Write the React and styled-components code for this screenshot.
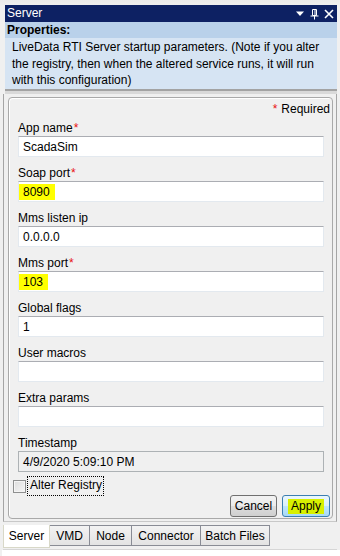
import styled, { createGlobalStyle } from "styled-components";

const GlobalStyle = createGlobalStyle`
  html, body {
    margin: 0;
    padding: 0;
    background: #f0f0f0;
  }
  body {
    font-family: "Liberation Sans", Arial, sans-serif;
    font-size: 12px;
    color: #000;
  }
`;

const Page = styled.div`
  width: 340px;
  height: 556px;
  padding-top: 5px;
  box-sizing: border-box;
  background: linear-gradient(180deg, #ebebeb 0px, #f0f0f0 6px);
  overflow: hidden;
`;

const Pane = styled.div`
  margin-left: 5px;
  width: 332px;
`;

const TitleBar = styled.div`
  height: 17px;
  background: #0d2163;
  color: #fff;
  display: flex;
  align-items: center;
  padding: 0 3px 0 2px;
  line-height: 17px;
`;

const TitleText = styled.span`
  flex: 1;
`;

const TitleButtons = styled.div`
  display: flex;
  align-items: center;
  gap: 5px;
  height: 17px;
`;

const PropsHeader = styled.div`
  height: 16px;
  line-height: 16px;
  background: #b9d1ea;
  font-weight: bold;
  padding-left: 2px;
`;

const Description = styled.div`
  background: #d6e4f3;
  padding: 1px 6px 2px 7px;
  line-height: 16.5px;
  height: 48px;
`;

const Splitter = styled.div`
  height: 3px;
  border-top: 2px solid #a3a3a3;
  background: #d9d9d9;
`;

const Body = styled.div`
  border-left: 1px solid #a5a5a5;
  border-right: 1px solid #a5a5a5;
  border-bottom: 1px solid #c8c8c8;
  margin-left: -2px;
  padding: 3px 3px 2px 4px;
  background: #f0f0f0;
`;

const GroupBox = styled.div`
  border: 1px solid #a9a9a9;
  border-radius: 4px;
  box-shadow: inset 1px 1px 0 #ffffff;
  padding: 4px 2px 2px 0;
  display: flex;
  flex-direction: column;
  height: 422px;
  box-sizing: border-box;
`;

const RequiredNote = styled.div`
  text-align: right;
  line-height: 15px;
  height: 15px;
  margin-bottom: 4px;
`;

const Star = styled.span`
  color: #e81010;
  margin-right: ${(p) => (p.$lead ? "4px" : "0")};
  margin-left: ${(p) => (p.$lead ? "0" : "1px")};
`;

const Field = styled.div`
  padding: 0 6px 0 9px;
  margin-bottom: 9px;
`;

const Label = styled.div`
  line-height: 15px;
  height: 15px;
`;

const Box = styled.div`
  height: 21px;
  box-sizing: border-box;
  border: 1px solid #e3e9ef;
  border-top-color: #abadb3;
  background: ${(p) => (p.$disabled ? "#f0f0f0" : "#ffffff")};
  ${(p) => p.$disabled && "border-color: #adb2b5;"}
  display: flex;
  align-items: center;
`;

const Value = styled.span`
  padding: 0 5px 0 4px;
  line-height: 16px;
  background: ${(p) => (p.$marked ? "#ffff00" : "transparent")};
`;

const CheckRow = styled.div`
  display: flex;
  align-items: center;
  height: 18px;
  margin-top: -4px;
  padding-left: 4px;
`;

const CheckBoxMark = styled.span`
  width: 11px;
  height: 11px;
  border: 1px solid #8e8f8f;
  background: linear-gradient(135deg, #dcdcdc, #f6f6f6);
  box-shadow: inset 0 0 0 1px #f4f4f4;
`;

const CheckLabel = styled.span`
  margin-left: 1px;
  padding: 1px 1px 2px 2px;
  border: 1px dotted #000;
  line-height: 15px;
`;

const ButtonRow = styled.div`
  display: flex;
  justify-content: flex-end;
  gap: 5px;
  margin-top: auto;
`;

const Button = styled.button`
  font: inherit;
  height: 22px;
  width: ${(p) => p.$width}px;
  padding: 0;
  border-radius: 3px;
  border: 1px solid ${(p) => (p.$primary ? "#3c7fb1" : "#707070")};
  background: ${(p) =>
    p.$primary
      ? "linear-gradient(180deg, #eaf6fd 0%, #d9f0fc 50%, #bee6fd 51%, #a7d9f5 100%)"
      : "linear-gradient(180deg, #f2f2f2 0%, #ebebeb 50%, #dddddd 51%, #cfcfcf 100%)"};
  color: #000;
  display: flex;
  align-items: center;
  justify-content: center;
`;

const Highlight = styled.span`
  background: #d8f000;
  padding: 0 3px;
  line-height: 15px;
`;

const TabStrip = styled.div`
  display: flex;
  margin-top: 3px;
  height: 24px;
  align-items: flex-start;
  border-bottom: 1px solid #d6d6d6;
  margin-left: -2px;
`;

const Tab = styled.div`
  box-sizing: border-box;
  width: ${(p) => p.$width}px;
  text-align: center;
  height: ${(p) => (p.$active ? "23px" : "21px")};
  line-height: 20px;
  border: 1px solid #898c95;
  border-left-width: ${(p) => (p.$first ? "1px" : "0")};
  border-top: ${(p) => (p.$active ? "0" : "1px solid #898c95")};
  background: ${(p) => (p.$active ? "#ffffff" : "linear-gradient(180deg, #f3f3f3, #e3e3e3)")};
  ${(p) => p.$active && "border-color: #d8d8c8; padding-top: 1px;"}
`;

const Footer = styled.div`
  height: 10px;
  background: #ffffff;
  margin-left: -3px;
  margin-right: -5px;
`;

const fields = [
  { label: "App name", value: "ScadaSim", required: true },
  { label: "Soap port", value: "8090", required: true, marked: true },
  { label: "Mms listen ip", value: "0.0.0.0" },
  { label: "Mms port", value: "103", required: true, marked: true },
  { label: "Global flags", value: "1" },
  { label: "User macros", value: "" },
  { label: "Extra params", value: "" },
  { label: "Timestamp", value: "4/9/2020 5:09:10 PM", disabled: true },
];

const tabs = [
  { name: "Server", width: 47, active: true },
  { name: "VMD", width: 40 },
  { name: "Node", width: 42 },
  { name: "Connector", width: 69 },
  { name: "Batch Files", width: 69 },
];

function TitleIcons() {
  return (
    <TitleButtons>
      <svg width="10" height="9" viewBox="0 0 10 9">
        <path d="M1 2.5 L9 2.5 L5 7 Z" fill="#fff" />
      </svg>
      <svg width="9" height="12" viewBox="0 0 9 12">
        <path d="M2.5 1.5 H6.5 V7.5 H2.5 Z M5 1.5 V7.5" fill="none" stroke="#fff" />
        <path d="M0.5 8 H8.5 M4.5 8 V11.5" stroke="#fff" />
      </svg>
      <svg width="10" height="10" viewBox="0 0 10 10">
        <path d="M1 1 L9 9 M9 1 L1 9" stroke="#fff" strokeWidth="1.6" />
      </svg>
    </TitleButtons>
  );
}

export default function App() {
  return (
    <Page>
      <GlobalStyle />
      <Pane>
        <TitleBar>
          <TitleText>Server</TitleText>
          <TitleIcons />
        </TitleBar>
        <PropsHeader>Properties:</PropsHeader>
        <Description>
          LiveData RTI Server startup parameters. (Note if you alter
          <br />
          the registry, then when the altered service runs, it will run
          <br />
          with this configuration)
        </Description>
        <Splitter />
        <Body>
          <GroupBox>
            <RequiredNote>
              <Star $lead>*</Star>Required
            </RequiredNote>
            {fields.map((f) => (
              <Field key={f.label}>
                <Label>
                  {f.label}
                  {f.required && <Star>*</Star>}
                </Label>
                <Box $disabled={f.disabled}>
                  <Value $marked={f.marked}>{f.value}</Value>
                </Box>
              </Field>
            ))}
            <CheckRow>
              <CheckBoxMark />
              <CheckLabel>Alter Registry</CheckLabel>
            </CheckRow>
            <ButtonRow>
              <Button $width={47}>Cancel</Button>
              <Button $width={48} $primary>
                <Highlight>Apply</Highlight>
              </Button>
            </ButtonRow>
          </GroupBox>
        </Body>
        <TabStrip>
          {tabs.map((t, i) => (
            <Tab key={t.name} $active={t.active} $width={t.width} $first={i === 0}>
              {t.name}
            </Tab>
          ))}
        </TabStrip>
        <Footer />
      </Pane>
    </Page>
  );
}
